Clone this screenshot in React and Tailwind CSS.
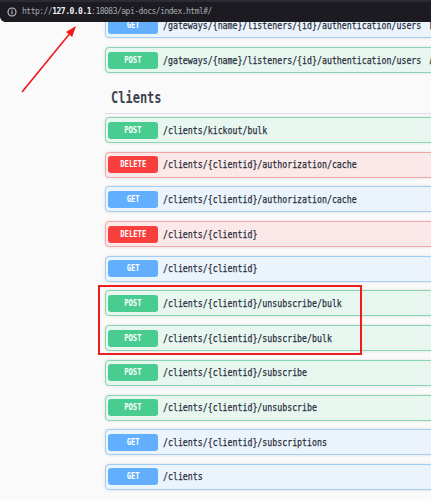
import React from "react";

const styles = {
  POST: { row: "bg-[#e8f6f0] border-[#86d7b1]", badge: "bg-[#49cc90]" },
  GET: { row: "bg-[#ebf3fb] border-[#a3cdf8]", badge: "bg-[#61affe]" },
  DELETE: { row: "bg-[#fbe8e8] border-[#f3a5a5]", badge: "bg-[#f93e3e]" },
};

function Row({ method, path, summary }) {
  const s = styles[method];
  return (
    <div
      className={`h-[26px] shrink-0 flex items-center border rounded-[4px] pl-[2px] -mr-[20px] shadow-[0_0_3px_rgba(0,0,0,0.12)] ${s.row}`}
    >
      <div
        className={`w-[50px] h-[17px] rounded-[3px] flex items-center justify-center shrink-0 ${s.badge}`}
      >
        <span className="inline-block scale-x-[0.8] text-white font-bold text-[9px] leading-none font-['DejaVu_Sans_Mono',monospace]">
          {method}
        </span>
      </div>
      <div className="ml-[5px] whitespace-nowrap flex items-center">
        <span className="inline-block origin-left scale-x-[0.75] text-[11px] leading-none text-[#272c3a] [-webkit-text-stroke:0.25px_#272c3a] font-['DejaVu_Sans_Mono',monospace]">
          {path}
          {summary && (
            <span className="ml-[11px]">{summary}</span>
          )}
        </span>
      </div>
    </div>
  );
}

const clients = [
  ["POST", "/clients/kickout/bulk"],
  ["DELETE", "/clients/{clientid}/authorization/cache"],
  ["GET", "/clients/{clientid}/authorization/cache"],
  ["DELETE", "/clients/{clientid}"],
  ["GET", "/clients/{clientid}"],
  ["POST", "/clients/{clientid}/unsubscribe/bulk"],
  ["POST", "/clients/{clientid}/subscribe/bulk"],
  ["POST", "/clients/{clientid}/subscribe"],
  ["POST", "/clients/{clientid}/unsubscribe"],
  ["GET", "/clients/{clientid}/subscriptions"],
  ["GET", "/clients"],
];

export default function App() {
  return (
    <div className="relative w-[431px] h-[500px] overflow-hidden bg-[#fafafa]">
      {/* browser address bar */}
      <div className="relative z-10 h-[22px] bg-[#2b2a33] rounded-bl-[6px] flex items-end">
        <div className="h-[20px] flex-1 bg-[#1c1b22] rounded-bl-[6px] flex items-center pl-[7px]">
          <svg width="10" height="10" viewBox="0 0 10 10" className="shrink-0">
            <circle cx="5" cy="5" r="4" fill="none" stroke="#c8c8cc" strokeWidth="1.1" />
            <rect x="4.45" y="4.2" width="1.1" height="3" fill="#c8c8cc" />
            <rect x="4.45" y="2.5" width="1.1" height="1.1" fill="#c8c8cc" />
          </svg>
          <span className="ml-[5px] text-[8px] tracking-[-0.5px] leading-none font-['DejaVu_Sans_Mono',monospace] text-[#a9a9ae] whitespace-nowrap">
            http://<span className="text-[#f0f0f2] font-bold">127.0.0.1</span>:18083/api-docs/index.html#/
          </span>
        </div>
      </div>

      {/* content */}
      <div className="-mt-[10px] pl-[105px] flex flex-col">
        <Row
          method="GET"
          path="/gateways/{name}/listeners/{id}/authentication/users"
          summary="List users"
        />
        <div className="mt-[9px]">
          <Row
            method="POST"
            path="/gateways/{name}/listeners/{id}/authentication/users"
            summary="Add user"
          />
        </div>

        <div className="mt-[15px] h-[26px] pl-[6px] border-b border-[#dcdde0] -mr-[20px] flex items-start">
          <span className="block origin-left scale-x-[0.8] text-[15px] leading-[20px] font-bold text-[#3b4151] font-['DejaVu_Sans_Mono',monospace]">
            Clients
          </span>
        </div>

        <div className="mt-[3px] flex flex-col gap-[8.7px]">
          {clients.map(([m, p], i) => (
            <Row key={i} method={m} path={p} />
          ))}
        </div>
      </div>

      {/* annotations */}
      <div className="absolute left-[98px] top-[285px] w-[264px] h-[70px] border-2 border-[#ee1c1c] pointer-events-none" />
      <svg
        className="absolute left-0 top-0 pointer-events-none"
        width="431"
        height="500"
        viewBox="0 0 431 500"
      >
        <line x1="22" y1="92" x2="69" y2="34.5" stroke="#f01818" strokeWidth="1.6" />
        <polygon points="76,26 72.2,37 66,32" fill="#f01818" />
      </svg>
    </div>
  );
}
